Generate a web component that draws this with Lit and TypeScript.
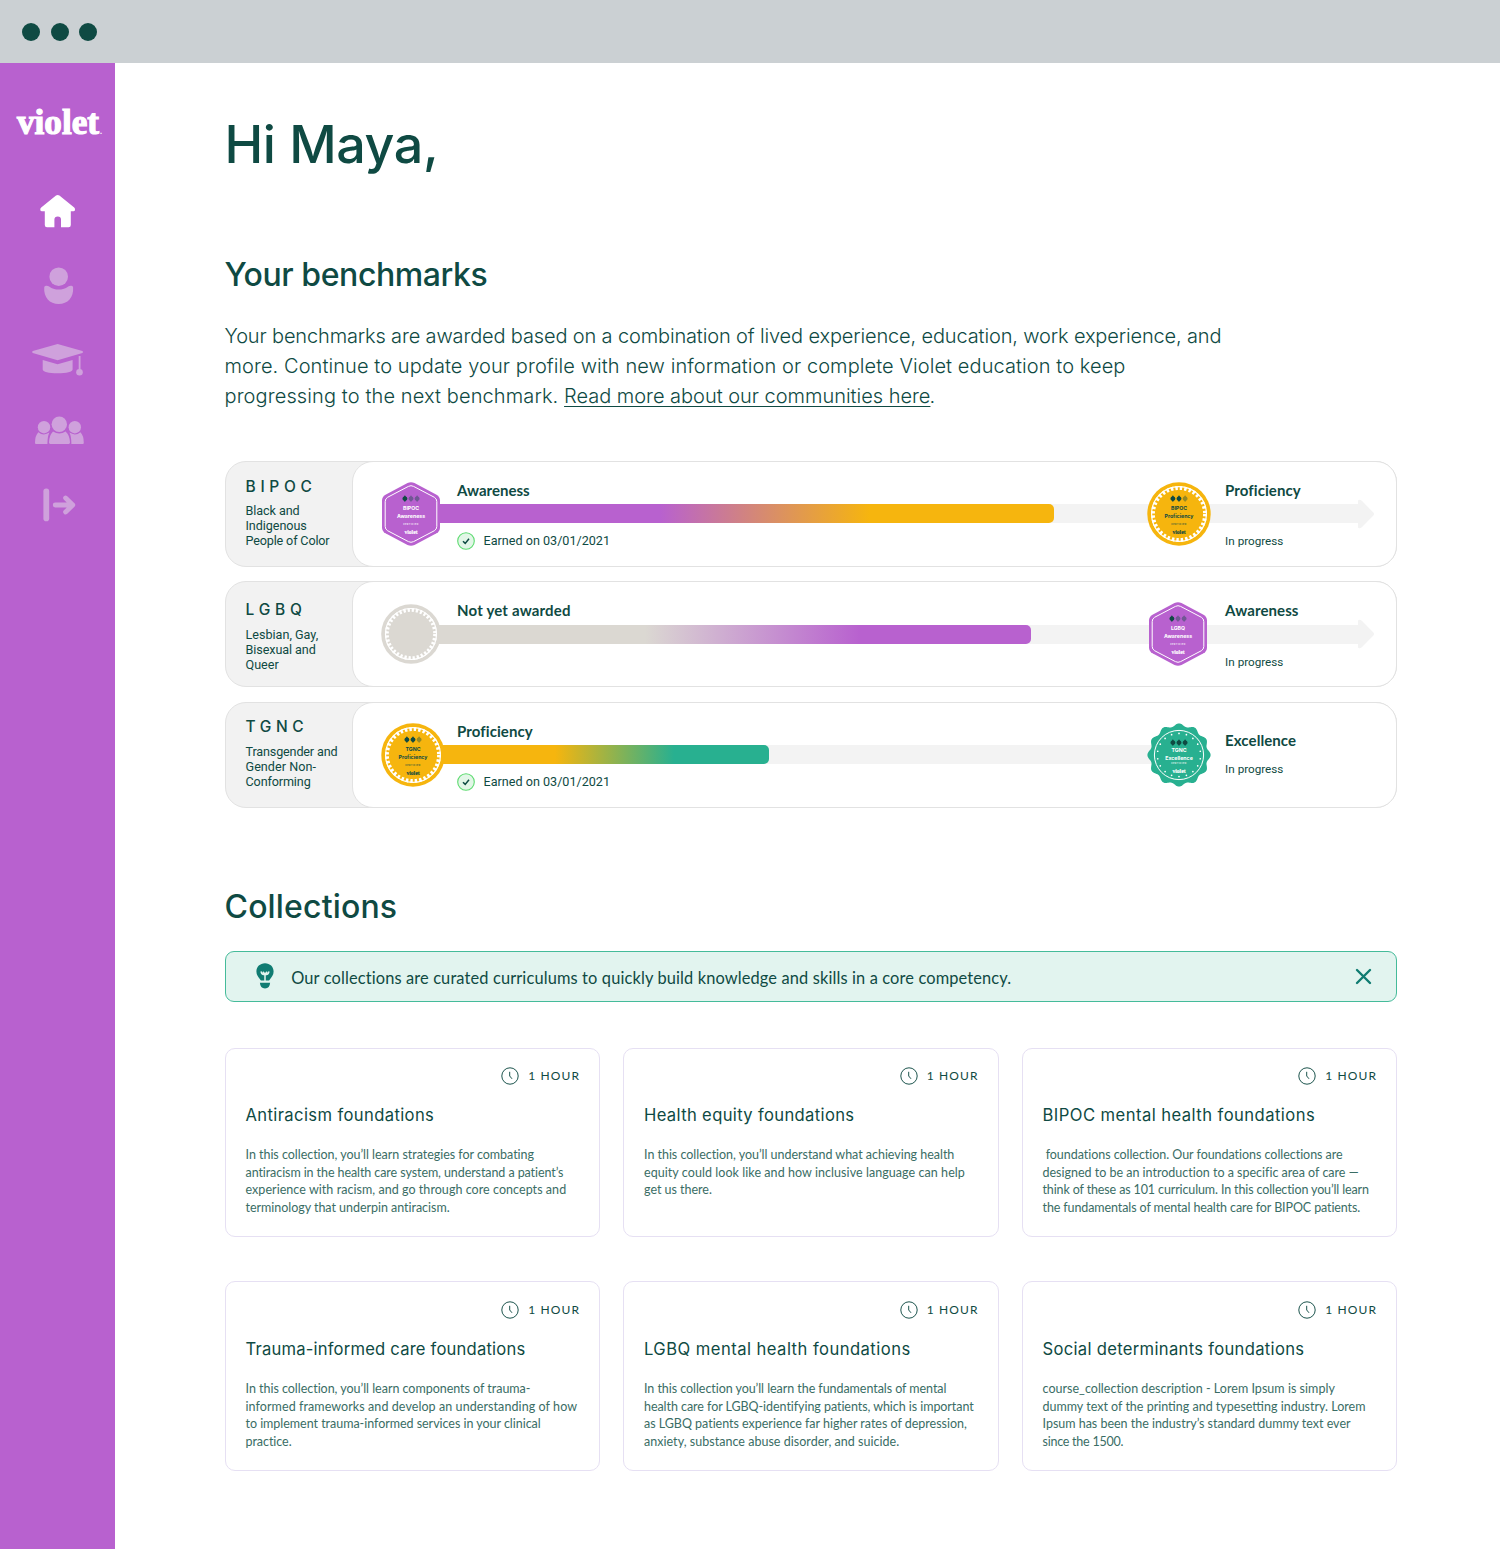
import { LitElement, html, svg, css, nothing } from "lit";
import { customElement, property } from "lit/decorators.js";

type Line = [text: string, tracking: number];
type Shape = "hex" | "seal" | "blank" | "star";

interface BadgeData {
  shape: Shape;
  group?: string;
  level?: string;
  filled?: number;
  x: number;
}

interface Benchmark {
  code: string;
  codeTracking: number;
  offset: number;
  about: Line[];
  from: BadgeData;
  to: BadgeData;
  start: Line;
  goal: Line;
  earned?: string;
  arrow: boolean;
  track: number;
  fill: number;
  gradient: string;
}

const PURPLE = "#b861cf";
const GOLD = "#f6b50e";
const GREEN = "#28b090";
const STONE = "#dbd8d2";

const BENCHMARKS: Benchmark[] = [
  {
    code: "BIPOC", codeTracking: 4.7, offset: 14.6,
    about: [["Black and", -0.08], ["Indigenous", -0.06], ["People of Color", -0.15]],
    from: { shape: "hex", group: "BIPOC", level: "Awareness", filled: 1, x: 25 },
    to: { shape: "seal", group: "BIPOC", level: "Proficiency", filled: 2, x: 792.8 },
    start: ["Awareness", 0], goal: ["Proficiency", 0.08],
    earned: "Earned on 03/01/2021", arrow: true, track: 945, fill: 641,
    gradient: `linear-gradient(90deg, ${PURPLE} 247px, ${GOLD} 457px)`,
  },
  {
    code: "LGBQ", codeTracking: 4.8, offset: 18,
    about: [["Lesbian, Gay,", 0], ["Bisexual and", -0.08], ["Queer", 0]],
    from: { shape: "blank", x: 25 },
    to: { shape: "hex", group: "LGBQ", level: "Awareness", filled: 1, x: 792 },
    start: ["Not yet awarded", 0.17], goal: ["Awareness", 0.1],
    arrow: true, track: 945, fill: 618,
    gradient: `linear-gradient(90deg, ${STONE} 232px, ${PURPLE} 447px)`,
  },
  {
    code: "TGNC", codeTracking: 4.6, offset: 14.7,
    about: [["Transgender and", -0.15], ["Gender Non-", 0.05], ["Conforming", -0.12]],
    from: { shape: "seal", group: "TGNC", level: "Proficiency", filled: 2, x: 27 },
    to: { shape: "star", group: "TGNC", level: "Excellence", filled: 3, x: 793 },
    start: ["Proficiency", 0.08], goal: ["Excellence", 0.08],
    earned: "Earned on 03/01/2021", arrow: false, track: 767, fill: 355.5,
    gradient: `linear-gradient(90deg, ${GOLD} 142px, ${GREEN} 261px)`,
  },
];

const COLLECTIONS: { title: Line; body: Line[] }[] = [
  {
    title: ["Antiracism foundations", 0.38],
    body: [
      ["In this collection, you’ll learn strategies for combating", -0.03],
      ["antiracism in the health care system, understand a patient’s", -0.083],
      ["experience with racism, and go through core concepts and", 0.05],
      ["terminology that underpin antiracism.", -0.03],
    ],
  },
  {
    title: ["Health equity foundations", 0.35],
    body: [
      ["In this collection, you’ll understand what achieving health", -0.03],
      ["equity could look like and how inclusive language can help", 0.063],
      ["get us there.", -0.02],
    ],
  },
  {
    title: ["BIPOC mental health foundations", 0.45],
    body: [
      [" foundations collection. Our foundations collections are", -0.04],
      ["designed to be an introduction to a specific area of care —", -0.005],
      ["think of these as 101 curriculum. In this collection you’ll learn", -0.125],
      ["the fundamentals of mental health care for BIPOC patients.", -0.105],
    ],
  },
  {
    title: ["Trauma-informed care foundations", 0.2],
    body: [
      ["In this collection, you’ll learn components of trauma-", -0.027],
      ["informed frameworks and develop an understanding of how", 0.08],
      ["to implement trauma-informed services in your clinical", -0.03],
      ["practice.", -0.05],
    ],
  },
  {
    title: ["LGBQ mental health foundations", 0.46],
    body: [
      ["In this collection you’ll learn the fundamentals of mental", -0.055],
      ["health care for LGBQ-identifying patients, which is important", -0.055],
      ["as LGBQ patients experience far higher rates of depression,", -0.02],
      ["anxiety, substance abuse disorder, and suicide.", 0.03],
    ],
  },
  {
    title: ["Social determinants foundations", 0.31],
    body: [
      ["course_collection description - Lorem Ipsum is simply", 0.03],
      ["dummy text of the printing and typesetting industry. Lorem", 0],
      ["Ipsum has been the industry’s standard dummy text ever", -0.015],
      ["since the 1500.", -0.24],
    ],
  },
];

const INTRO: Line[] = [
  ["Your benchmarks are awarded based on a combination of lived experience, education, work experience, and", -0.145],
  ["more. Continue to update your profile with new information or complete Violet education to keep", 0.08],
];

const tracked = ([text, tracking]: Line) =>
  html`<span class="line" style="letter-spacing:${tracking}px">${text}</span>`;

@customElement("achievement-badge")
class AchievementBadge extends LitElement {
  @property({ attribute: false }) data!: BadgeData;

  static styles = css`
    :host { display: block; width: 66px; height: 66px; }
    svg { display: block; width: 66px; height: 66px; overflow: visible; }
    text { text-anchor: middle; }
    .name { font: 700 5.2px Inter, sans-serif; }
    .cert { font: 600 2.1px Inter, sans-serif; letter-spacing: 0.55px; }
    .brand { font: 700 5.6px "Liberation Serif", serif; }
  `;

  private scallops() {
    const points: string[] = [];
    for (let i = 0; i < 240; i++) {
      const a = (i / 240) * Math.PI * 2;
      const r = 30.1 + 1.5 * Math.cos(12 * a);
      points.push(`${(r * Math.sin(a)).toFixed(2)},${(-r * Math.cos(a)).toFixed(2)}`);
    }
    return points.join(" ");
  }

  private teeth(r: number, color: string) {
    const step = (2 * Math.PI * (r - 5.7)) / 36;
    return svg`
      <circle r=${r} fill=${color} />
      <circle r=${r - 4.3} fill="none" stroke="#fff" stroke-width="1.2" />
      <circle r=${r - 5.7} fill="none" stroke="#fff" stroke-width="3.8"
        stroke-dasharray="${step * 0.55} ${step * 0.45}" />`;
  }

  private base() {
    switch (this.data.shape) {
      case "hex":
        return svg`
          <path d="M-3.5 -31 Q0 -32.6 3.5 -31 L25.5 -19.3 Q29 -17.3 29 -13.5 V13.5 Q29 17.3 25.5 19.3 L3.5 31 Q0 32.6 -3.5 31 L-25.5 19.3 Q-29 17.3 -29 13.5 V-13.5 Q-29 -17.3 -25.5 -19.3 Z" fill=${PURPLE} />
          <path d="M-2.6 -27.6 Q0 -29 2.6 -27.6 L23.4 -16.7 Q25.8 -15.3 25.8 -12.4 V12.4 Q25.8 15.3 23.4 16.7 L2.6 27.6 Q0 29 -2.6 27.6 L-23.4 16.7 Q-25.8 15.3 -25.8 12.4 V-12.4 Q-25.8 -15.3 -23.4 -16.7 Z" fill="none" stroke="#fff" stroke-width="1" />`;
      case "seal":
        return this.teeth(31.7, GOLD);
      case "blank":
        return this.teeth(29.8, STONE);
      case "star":
        return svg`
          <polygon points=${this.scallops()} fill=${GREEN} />
          <circle r="24.6" fill="none" stroke="#fff" stroke-width="1" />
          ${Array.from({ length: 18 }, (_, i) => {
            const a = (i / 18) * Math.PI * 2;
            return svg`<circle cx=${21.6 * Math.sin(a)} cy=${-21.6 * Math.cos(a)} r="0.85" fill="#fff" />`;
          })}`;
    }
  }

  render() {
    const { shape, group, level, filled = 0 } = this.data;
    const ink = shape === "seal" ? "#0f4a43" : "#fff";
    const drop = shape === "star" ? 3 : 0;
    return html`<svg viewBox="-33 -33 66 66">
      ${this.base()}
      ${shape === "blank"
        ? nothing
        : svg`
          ${[-6.1, 0, 6.1].map((x, i) => svg`
            <path transform="translate(${x} ${-15.4 + drop})" opacity=${i < filled ? 1 : 0.42}
              d="M0 -3.3 Q0.9 -1.8 2 -1.4 Q3 0 2 1.4 Q0.9 1.8 0 3.3 Q-0.9 1.8 -2 1.4 Q-3 0 -2 -1.4 Q-0.9 -1.8 0 -3.3 Z" fill="#0f4a43" />`)}
          <text class="name" y=${shape === "star" ? -2.8 : -3.7} fill=${ink}>${group}</text>
          <text class="name" y=${shape === "star" ? 4.7 : 4} fill=${ink}>${level}</text>
          <text class="cert" y=${shape === "star" ? 9.2 : 11.3} fill=${ink}>CERTIFIED</text>
          <text class="brand" y=${shape === "star" ? 17.8 : 19.5} fill=${ink} stroke=${ink} stroke-width="0.15">violet</text>`}
    </svg>`;
  }
}

@customElement("benchmark-row")
class BenchmarkRow extends LitElement {
  @property({ attribute: false }) data!: Benchmark;

  static styles = css`
    :host { display: block; color: #0f4a43; }
    .row { box-sizing: border-box; height: 106px; display: flex; background: #f2f2f2; border: 1px solid #e2e2e2; border-radius: 21px; }
    .who { box-sizing: border-box; width: 127.6px; padding-left: 20px; flex: none; }
    .code { font: 500 15.5px/20px Inter, sans-serif; margin-bottom: 6.8px; }
    .about { font: 400 12.6px/15px Roboto, sans-serif; }
    .line { display: block; white-space: pre; }
    .panel { flex: 1; box-sizing: border-box; margin: -1px; display: grid; grid-template: 104px / 104px 768px 1fr; align-items: center; background: #fff; border: 1px solid #e2e2e2; border-radius: 21px; }
    .track { grid-area: 1 / 1 / 2 / 4; justify-self: start; margin: 0 0 0.4px 60px; display: flex; align-items: center; }
    .rail { height: 19px; background: #f3f3f3; }
    .fill { height: 19px; border-radius: 0 5px 5px 0; }
    .arrow { display: block; width: 17px; height: 30px; }
    achievement-badge { grid-area: 1 / 1 / 2 / 4; justify-self: start; }
    .start, .end { grid-row: 1; align-self: start; display: flex; flex-direction: column; gap: 32.1px; padding-top: 18.2px; }
    .start { grid-column: 2; }
    .end { grid-column: 3; }
    .end.close { padding-top: 27px; gap: 10.5px; }
    .label { font: 700 15px/20px Lato, sans-serif; }
    .status { display: flex; align-items: center; gap: 8.5px; height: 18px; font: 400 12.6px/18px Roboto, sans-serif; letter-spacing: 0; white-space: nowrap; }
    .status.small { font-size: 11.7px; }
    .status svg { width: 18px; height: 18px; }
  `;

  render() {
    const d = this.data;
    return html`<div class="row">
      <div class="who" style="padding-top:${d.offset}px">
        <div class="code" style="letter-spacing:${d.codeTracking}px">${d.code}</div>
        <div class="about">${d.about.map(tracked)}</div>
      </div>
      <div class="panel">
        <div class="track">
          <div class="rail" style="width:${d.track}px">
            <div class="fill" style="width:${d.fill}px;background:${d.gradient}"></div>
          </div>
          ${d.arrow
            ? html`<svg class="arrow" viewBox="0 0 17 30"><path d="M0 1.6 Q1.8 -0.4 3.8 1.8 L15.4 13.6 Q16.6 15 15.4 16.4 L3.8 28.2 Q1.8 30.4 0 28.4 Z" fill="#f3f3f3" /></svg>`
            : nothing}
        </div>
        <achievement-badge style="margin-left:${d.from.x}px" .data=${d.from}></achievement-badge>
        <achievement-badge style="margin-left:${d.to.x}px" .data=${d.to}></achievement-badge>
        <div class="start">
          <div class="label">${tracked(d.start)}</div>
          ${d.earned
            ? html`<div class="status">
                <svg viewBox="0 0 18 18"><circle cx="9" cy="9" r="8.3" fill="#e2f6e7" stroke="#5ddb70" stroke-width="1.1" /><path d="M6 9.3 L8.2 11.4 L12 6.7" fill="none" stroke="#0f4a43" stroke-width="1.5" /></svg>
                ${d.earned}
              </div>`
            : nothing}
        </div>
        <div class="end ${d.arrow ? "" : "close"}">
          <div class="label">${tracked(d.goal)}</div>
          <div class="status small">In progress</div>
        </div>
      </div>
    </div>`;
  }
}

@customElement("app-root")
class AppRoot extends LitElement {
  static styles = css`
    :host { display: block; color: #0f4a43; background: #fff; font-family: Inter, sans-serif; }
    .page { display: flex; flex-direction: column; height: 1549px; overflow: hidden; }
    .chrome { flex: none; box-sizing: border-box; height: 63px; background: #cbd0d3; display: flex; align-items: center; gap: 10.6px; padding: 1px 0 0 22px; }
    .dot { width: 18px; height: 18px; border-radius: 50%; background: #0f4a43; }
    .body { flex: 1; display: flex; min-height: 0; }
    nav { flex: none; box-sizing: border-box; width: 115px; background: #b861cf; display: flex; flex-direction: column; align-items: flex-start; }
    .logo { display: block; width: 115px; height: 60px; margin-top: 27px; overflow: visible; }
    .logo-text { font: 700 35px "Liberation Serif", serif; }
    .logo-mark { font: 700 8px "Liberation Serif", serif; }
    .icon { display: block; width: 56px; margin-left: 30px; fill: #cfa1dc; }
    .home { height: 42px; margin-top: 40px; fill: #fff; }
    .person { height: 46px; margin-top: 30px; }
    .learn { height: 42px; margin-top: 30px; }
    .group { height: 40px; margin-top: 30px; }
    .exit { height: 42px; margin-top: 34px; }
    main { width: 1172.5px; padding: 52.4px 0 0 109.5px; }
    h1, h2, h3, p { margin: 0; }
    h1 { font-weight: 500; font-size: 52px; line-height: 60px; letter-spacing: -0.35px; }
    h2 { font-weight: 500; font-size: 32px; line-height: 40px; }
    .yours { letter-spacing: -0.42px; margin-top: 79.3px; }
    .sets { letter-spacing: 0.16px; margin-top: 79px; }
    .intro { font-weight: 300; font-size: 20px; line-height: 30px; margin-top: 26.8px; }
    .line { display: block; white-space: pre; }
    .lead { letter-spacing: 0.11px; }
    .link { text-decoration: underline; text-decoration-thickness: 1px; text-underline-offset: 3px; letter-spacing: -0.02px; color: inherit; }
    .stop { margin-left: -1px; }
    .rows { display: flex; flex-direction: column; gap: 14.3px; margin-top: 49.5px; }
    .banner { box-sizing: border-box; height: 50.5px; margin-top: 24.5px; display: flex; align-items: center; background: #e2f4ef; border: 1.3px solid #45bb9a; border-radius: 9px; padding: 0 24px 0 30.7px; }
    .bulb { width: 18px; height: 26px; margin-right: 17px; }
    .note { flex: 1; font: 400 16.4px/24px Lato, sans-serif; letter-spacing: 0.133px; padding-top: 2.6px; }
    .close { width: 17px; height: 17px; margin-bottom: 0; }
    .grid { display: grid; grid-template-columns: repeat(3, 375.5px); grid-auto-rows: 189.8px; gap: 44px 23px; margin-top: 46px; }
    .card { box-sizing: border-box; border: 1.4px solid #e6e0f3; border-radius: 10px; padding: 18.7px 18.8px 0 20px; }
    .time { display: flex; justify-content: flex-end; align-items: center; gap: 9px; height: 18px; font: 400 12px/18px Lato, sans-serif; letter-spacing: 1.15px; }
    .time svg { width: 18px; height: 18px; }
    h3 { font-weight: 400; font-size: 16.6px; line-height: 24px; margin-top: 17.8px; }
    .text { font: 400 12.5px/17.5px Lato, sans-serif; margin-top: 19.3px; color: #3a6d65; }
  `;

  render() {
    return html`<div class="page">
      <div class="chrome"><span class="dot"></span><span class="dot"></span><span class="dot"></span></div>
      <div class="body">
        <nav>
          <svg class="logo" viewBox="0 90 115 60" fill="#fff">
            <text class="logo-text" x="17" y="133.9" textLength="82" lengthAdjust="spacingAndGlyphs" stroke="#fff" stroke-width="1.2">violet</text>
            <text class="logo-mark" x="100" y="133.5">.</text>
          </svg>
          <svg class="icon home" viewBox="30 190 56 42">
            <path d="M56 195.6 Q57.7 194.2 59.4 195.6 L74.2 207.6 Q75.2 208.6 75 210 Q74.8 211.2 73.4 211.2 H70.8 V225 Q70.8 227.2 68.6 227.2 H61 V219.6 Q61 216.6 57.8 216.6 Q54.4 216.6 54.4 219.6 V227.2 H47 Q44.8 227.2 44.8 225 V211.2 H42 Q40.5 211.2 40.3 210 Q40.1 208.6 41.2 207.6 Z" />
          </svg>
          <svg class="icon person" viewBox="30 262 56 46">
            <circle cx="58.7" cy="276.7" r="9.3" />
            <path d="M44.2 287.4 Q44.4 285.4 46.6 285.8 C50.5 286.4 51.5 289.6 58.7 289.6 C65.9 289.6 66.9 286.4 70.8 285.8 Q73 285.4 73.1 287.4 C73.8 297 67.8 304 58.7 304 C49.6 304 43.6 297 44.2 287.4 Z" />
          </svg>
          <svg class="icon learn" viewBox="30 338 56 42">
            <path d="M57.6 344 L82.4 351 Q84 352 82.4 353 L57.6 360.2 L32.8 353 Q31.2 352 32.8 351 Z" />
            <path d="M42.7 360 L57.6 364.2 L72.6 360 V369.4 C72.6 371.6 66.5 373.2 57.6 373.2 C48.8 373.2 42.7 371.6 42.7 369.4 Z" />
            <rect x="78.7" y="356" width="1.8" height="14" />
            <circle cx="79.5" cy="372.2" r="3.3" />
          </svg>
          <svg class="icon group" viewBox="30 410 56 40">
            <circle cx="59.3" cy="424.3" r="7.7" />
            <circle cx="44" cy="427.2" r="6.2" />
            <circle cx="74.8" cy="427.2" r="6.2" />
            <path d="M53 431.4 Q59.3 435.6 65.6 431.4 Q70 435.6 70 442.6 Q70 444 68.8 444 H50.2 Q49 444 49 442.6 Q49 435.6 53 431.4 Z" />
            <path d="M38.4 432.2 Q43.4 436.4 49.4 432.6 Q47.4 436.6 47.4 444 H36 Q35 444 35 442.8 Q35 435.6 38.4 432.2 Z" />
            <path d="M80.4 432.2 Q75.4 436.4 69.4 432.6 Q71.4 436.6 71.4 444 H82.8 Q83.8 444 83.8 442.8 Q83.8 435.6 80.4 432.2 Z" />
          </svg>
          <svg class="icon exit" viewBox="30 484 56 42">
            <rect x="43.4" y="488.6" width="5.8" height="32.6" rx="2.8" />
            <path d="M55.2 505 H72.6 M65.6 498 L72.8 505 L65.6 512" fill="none" stroke="#cfa1dc" stroke-width="4.8" stroke-linecap="round" stroke-linejoin="round" />
          </svg>
        </nav>
        <main>
          <h1>Hi Maya,</h1>
          <h2 class="yours">Your benchmarks</h2>
          <p class="intro">
            ${INTRO.map(tracked)}<span class="lead">progressing to the next benchmark. </span><a class="link">Read more about our communities here</a><span class="stop">.</span>
          </p>
          <div class="rows">
            ${BENCHMARKS.map((b) => html`<benchmark-row .data=${b}></benchmark-row>`)}
          </div>
          <h2 class="sets">Collections</h2>
          <div class="banner">
            <svg class="bulb" viewBox="0 0 18 26">
              <path d="M9 0.2 C14 0.2 17.6 3.8 17.6 8.4 C17.6 12 15.6 13.8 14.2 16 Q13.4 17.4 13 17.4 H5 Q4.6 17.4 3.8 16 C2.4 13.8 0.4 12 0.4 8.4 C0.4 3.8 4 0.2 9 0.2 Z" fill="#107c72" />
              <path d="M3.9 19.8 H14.1 Q13.8 25.4 9 25.4 Q4.2 25.4 3.9 19.8 Z" fill="#107c72" />
              <path d="M9 17.6 V11.6 M5.2 9 Q5.8 11.6 9 11.6 Q12.2 11.6 12.8 9 M7.4 9.2 L9 11.4 L10.6 9.2" fill="none" stroke="#e2f4ef" stroke-width="1.5" stroke-linecap="round" />
            </svg>
            <div class="note">Our collections are curated curriculums to quickly build knowledge and skills in a core competency.</div>
            <svg class="close" viewBox="0 0 17 17"><path d="M2 2 L15 15 M15 2 L2 15" stroke="#107c72" stroke-width="2.4" stroke-linecap="round" /></svg>
          </div>
          <div class="grid">
            ${COLLECTIONS.map((c) => html`<article class="card">
              <div class="time">
                <svg viewBox="0 0 18 18" fill="none" stroke="#1c544d"><circle cx="9" cy="9" r="8.2" stroke-width="1" /><path d="M8.7 4.8 V9 L11 11.8" stroke-width="1" /></svg>
                1 HOUR
              </div>
              <h3>${tracked(c.title)}</h3>
              <p class="text">${c.body.map(tracked)}</p>
            </article>`)}
          </div>
        </main>
      </div>
    </div>`;
  }
}
